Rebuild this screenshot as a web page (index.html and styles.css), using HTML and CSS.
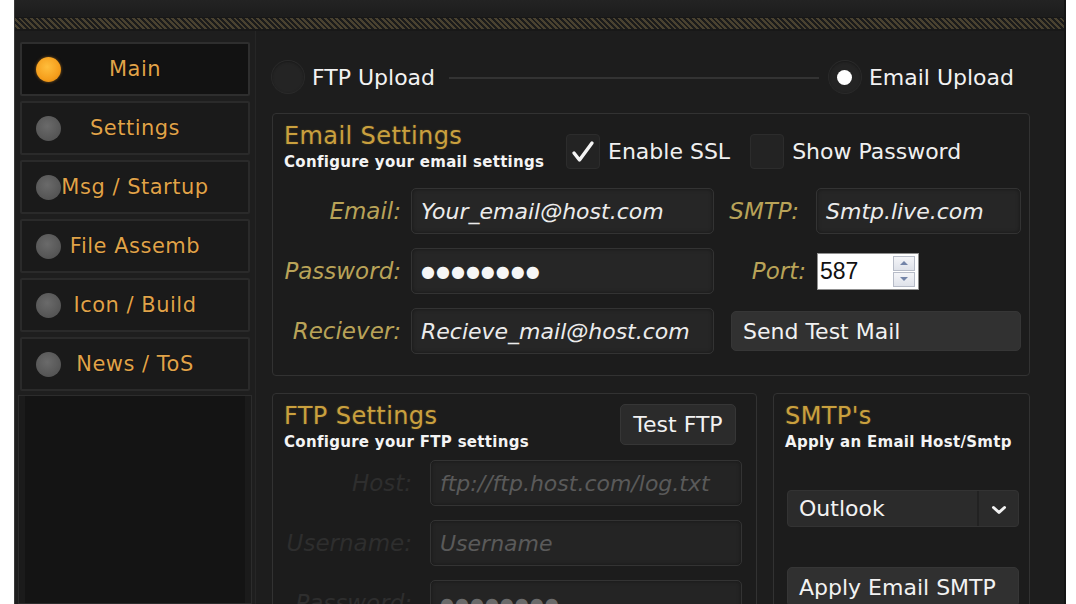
FILE: index.html
```html
<!DOCTYPE html>
<html>
<head>
<meta charset="utf-8">
<link rel="stylesheet" href="styles.css">
</head>
<body>
<div class="window">
  <div class="titlebar"></div>
  <div class="stripe"></div>
  <div class="body">
    <aside class="sidebar">
      <div class="nav-item active"><span class="dot"></span><span class="nav-label">Main</span></div>
      <div class="nav-item"><span class="dot"></span><span class="nav-label">Settings</span></div>
      <div class="nav-item"><span class="dot"></span><span class="nav-label">Msg / Startup</span></div>
      <div class="nav-item"><span class="dot"></span><span class="nav-label">File Assemb</span></div>
      <div class="nav-item"><span class="dot"></span><span class="nav-label">Icon / Build</span></div>
      <div class="nav-item"><span class="dot"></span><span class="nav-label">News / ToS</span></div>
      <div class="sidebar-fill"></div>
    </aside>
    <main class="content">
      <div class="upload-row">
        <div class="radio"><span class="radio-circle"></span><span>FTP Upload</span></div>
        <span class="rule"></span>
        <div class="radio"><span class="radio-circle checked"></span><span>Email Upload</span></div>
      </div>

      <section class="group email-group">
        <div class="group-head">
          <div class="titles">
            <h2 class="group-title">Email Settings</h2>
            <p class="group-sub">Configure your email settings</p>
          </div>
          <div class="check ssl">
            <span class="box"><svg width="34" height="35" viewBox="0 0 34 35"><path d="M8 19 L13.5 26 L26 9" fill="none" stroke="#f4f4f4" stroke-width="3.4" stroke-linecap="round" stroke-linejoin="round"/></svg></span>
            <span>Enable SSL</span>
          </div>
          <div class="check showpw">
            <span class="box"></span>
            <span>Show Password</span>
          </div>
        </div>
        <div class="form-grid">
          <span class="lbl">Email:</span>
          <div class="field">Your_email@host.com</div>
          <span class="lbl">SMTP:</span>
          <div class="field">Smtp.live.com</div>

          <span class="lbl">Password:</span>
          <div class="field pw">●●●●●●●●</div>
          <span class="lbl">Port:</span>
          <div class="spin">
            <span class="spin-val">587</span>
            <span class="spin-btns">
              <span class="spin-btn"><svg width="10" height="6" viewBox="0 0 10 6"><path d="M1 5 L5 1 L9 5 Z" fill="#7384a8"/></svg></span>
              <span class="spin-btn"><svg width="10" height="6" viewBox="0 0 10 6"><path d="M1 1 L5 5 L9 1 Z" fill="#7384a8"/></svg></span>
            </span>
          </div>

          <span class="lbl">Reciever:</span>
          <div class="field">Recieve_mail@host.com</div>
          <button class="btn send">Send Test Mail</button>
        </div>
      </section>

      <div class="lower">
        <section class="group ftp-group">
          <div class="group-head ftp-head">
            <div class="titles">
              <h2 class="group-title">FTP Settings</h2>
              <p class="group-sub">Configure your FTP settings</p>
            </div>
            <button class="btn test-ftp">Test FTP</button>
          </div>
          <div class="ftp-grid">
            <span class="lbl dim">Host:</span>
            <div class="field ph">ftp://ftp.host.com/log.txt</div>
            <span class="lbl dim">Username:</span>
            <div class="field ph">Username</div>
            <span class="lbl dim">Password:</span>
            <div class="field ph pwdim">●●●●●●●●</div>
          </div>
        </section>

        <section class="group smtp-group">
          <div class="group-head">
            <div class="titles">
              <h2 class="group-title">SMTP's</h2>
              <p class="group-sub">Apply an Email Host/Smtp</p>
            </div>
          </div>
          <div class="select">
            <span class="select-val">Outlook</span>
            <span class="select-arrow"><svg width="16" height="10" viewBox="0 0 16 10"><path d="M2.5 2.5 L8 7.5 L13.5 2.5" fill="none" stroke="#f2f2f2" stroke-width="3" stroke-linecap="round" stroke-linejoin="round"/></svg></span>
          </div>
          <button class="btn apply">Apply Email SMTP</button>
        </section>
      </div>
    </main>
  </div>
</div>
</body>
</html>
```

FILE: styles.css
```css
* { box-sizing: border-box; }

html, body {
  margin: 0;
  padding: 0;
  height: 604px;
  overflow: hidden;
  background: #ffffff;
}

body {
  font-family: "DejaVu Sans", "Liberation Sans", sans-serif;
  color: #ececec;
}

.window {
  margin-left: 14px;
  width: 1052px;
  height: 604px;
  background: #1e1e1e;
  border-left: 1px solid #3a3a3a;
  border-right: 2px solid #151515;
  display: flex;
  flex-direction: column;
  overflow: hidden;
}

.titlebar {
  height: 17px;
  background: linear-gradient(#232323, #1c1c1c);
  flex: none;
}

.stripe {
  height: 14px;
  flex: none;
  background: repeating-linear-gradient(45deg, #1b1b1b 0 2px, #4a4230 2px 4px);
  border-top: 1px solid #171717;
  border-bottom: 2px solid #181818;
}

.body {
  flex: 1;
  display: flex;
  gap: 3px;
  padding-left: 3px;
  min-height: 0;
}

/* Sidebar */
.sidebar {
  width: 234px;
  flex: none;
  display: flex;
  flex-direction: column;
  padding-top: 11px;
  gap: 5px;
}

.nav-item {
  height: 54px;
  margin: 0 2px;
  display: grid;
  align-items: center;
  background: #1a1a1a;
  border: 2px solid #2a2a2a;
  border-radius: 2px;
}

.nav-item.active {
  background: #121212;
  border-color: #2e2e2e;
}

.nav-item > * { grid-area: 1 / 1; }

.dot {
  justify-self: start;
  margin-left: 14px;
  width: 25px;
  height: 25px;
  border-radius: 50%;
  background: radial-gradient(circle at 45% 40%, #6a6a6a, #555555 70%);
}

.nav-item.active .dot {
  background: radial-gradient(circle at 45% 40%, #ffbe3c, #f59e1c 60%, #d27e0e);
  box-shadow: 0 0 3px rgba(255, 160, 30, 0.5);
}

.nav-label {
  justify-self: center;
  font-size: 21px;
  letter-spacing: 0.5px;
  color: #e0a34a;
  text-shadow: 0 0 1px #000;
}

.sidebar-fill {
  flex: 1;
  margin-top: -1px;
  background: #141414;
  border: 1px solid #2c2c2c;
  box-shadow: inset 6px 0 0 #1b1b1b, inset -6px 0 0 #1b1b1b;
}

/* Content */
.content {
  flex: 1;
  padding: 0 34px 0 16px;
  border-left: 1px solid #262626;
  background: #1d1d1d;
  min-width: 0;
}

.upload-row {
  margin-top: 28px;
  height: 36px;
  display: flex;
  align-items: center;
}

.radio {
  display: flex;
  align-items: center;
  gap: 8px;
  font-size: 22px;
  color: #f2f2f2;
}

.radio-circle {
  width: 32px;
  height: 32px;
  border-radius: 50%;
  background: #242424;
  box-shadow: 0 0 0 1px #2a2a2a, inset 0 1px 2px #1a1a1a;
  display: flex;
  align-items: center;
  justify-content: center;
}

.radio-circle.checked::after {
  content: "";
  width: 15px;
  height: 15px;
  border-radius: 50%;
  background: #ffffff;
}

.rule {
  flex: 1;
  height: 2px;
  background: #333333;
  margin: 2px 10px 0 14px;
}

.radio:last-child { margin-right: 16px; }

/* Groups */
.group {
  border: 1px solid #323232;
  border-radius: 4px;
  background: #1c1c1c;
}

.email-group {
  margin-top: 18px;
  padding-bottom: 21px;
}

.group-head {
  display: flex;
  align-items: flex-start;
  padding: 9px 12px 0 11px;
}

.titles { width: 270px; flex: none; }

.group-title {
  margin: 0;
  font-size: 24px;
  line-height: 26px;
  letter-spacing: 0.4px;
  font-weight: normal;
  color: #c9a03e;
  text-shadow: 0 0 2px rgba(200, 150, 50, 0.35);
}

.group-sub {
  margin: 4px 0 0;
  font-family: "DejaVu Sans", sans-serif;
  font-weight: bold;
  font-size: 15px;
  line-height: 18px;
  color: #f4f4f4;
  letter-spacing: 0.3px;
  white-space: nowrap;
}

.check {
  display: flex;
  align-items: center;
  gap: 8px;
  margin-top: 11px;
  font-size: 22px;
  color: #f0f0f0;
}

.check.ssl { margin-left: 12px; }
.check.showpw { margin-left: 20px; }

.box {
  width: 34px;
  height: 35px;
  border-radius: 4px;
  background: #232323;
  border: 1px solid #2c2c2c;
  display: flex;
}

.box svg { margin: -1px; }

.form-grid {
  margin-top: 17px;
  display: grid;
  grid-template-columns: 138px 303px 102px 205px;
  grid-auto-rows: 46px;
  row-gap: 14px;
  align-items: center;
}

.lbl {
  justify-self: end;
  padding-right: 10px;
  font-size: 23px;
  font-style: italic;
  color: #b9a358;
  white-space: nowrap;
}

.form-grid .lbl:nth-child(3),
.form-grid .lbl:nth-child(8) { padding-right: 17px; }

.field {
  height: 46px;
  display: flex;
  align-items: center;
  padding-left: 9px;
  background: #262626;
  border: 1px solid #333333;
  border-radius: 5px;
  box-shadow: inset 0 0 4px rgba(0, 0, 0, 0.4);
  font-size: 22px;
  font-style: italic;
  color: #ececec;
  white-space: nowrap;
  overflow: hidden;
}

.field.pw {
  font-style: normal;
  font-size: 16px;
  letter-spacing: 1px;
  color: #f6f6f6;
}

.spin {
  width: 102px;
  height: 37px;
  margin-left: 1px;
  background: #ffffff;
  border: 1px solid #8f8f8f;
  display: flex;
  align-items: center;
  justify-content: space-between;
  padding: 0 2px 0 2px;
}

.spin-val {
  font-family: "Liberation Sans", sans-serif;
  font-size: 23px;
  color: #111111;
}

.spin-btns {
  display: flex;
  flex-direction: column;
  gap: 1px;
  margin-right: 1px;
}

.spin-btn {
  width: 22px;
  height: 15px;
  background: linear-gradient(#f4f5f8, #dfe2ea);
  border: 1px solid #b7bcc8;
  display: flex;
  align-items: center;
  justify-content: center;
}

.btn {
  font-family: "DejaVu Sans", "Liberation Sans", sans-serif;
  font-size: 22px;
  color: #f2f2f2;
  background: #2e2e2e;
  border: 1px solid #363636;
  border-radius: 5px;
  text-align: left;
  padding: 0 0 0 11px;
  cursor: default;
  white-space: nowrap;
}

.send {
  grid-column: 3 / 5;
  margin-left: 17px;
  height: 40px;
  background: #313131;
}

/* Lower row */
.lower {
  margin-top: 17px;
  display: flex;
  gap: 16px;
}

.ftp-group {
  width: 486px;
  height: 230px;
}

.ftp-head { justify-content: space-between; padding-right: 20px; }

.test-ftp {
  height: 41px;
  width: 116px;
  margin-top: 1px;
  text-align: center;
  padding: 0;
  background: #2b2b2b;
}

.ftp-grid {
  margin-top: 9px;
  display: grid;
  grid-template-columns: 157px 312px;
  grid-auto-rows: 46px;
  row-gap: 14px;
  align-items: center;
}

.lbl.dim {
  color: #2e2e2e;
  padding-right: 18px;
}

.field.ph {
  color: #5a5a5a;
  background: #242424;
}

.field.pwdim {
  font-style: normal;
  font-size: 16px;
  letter-spacing: 1px;
  color: #6a6a6a;
}

.smtp-group {
  width: 257px;
  height: 230px;
}

.select {
  margin: 39px 10px 0 13px;
  height: 37px;
  display: flex;
  background: #2b2b2b;
  border: 1px solid #333333;
  border-radius: 4px;
}

.select-val {
  flex: 1;
  padding-left: 11px;
  display: flex;
  align-items: center;
  font-size: 22px;
  color: #f2f2f2;
  border-right: 2px solid #222222;
}

.select-arrow {
  width: 39px;
  display: flex;
  align-items: center;
  justify-content: center;
  padding-top: 2px;
}

.apply {
  display: block;
  margin: 40px 10px 0 13px;
  width: 232px;
  height: 40px;
  background: #303030;
}
```
